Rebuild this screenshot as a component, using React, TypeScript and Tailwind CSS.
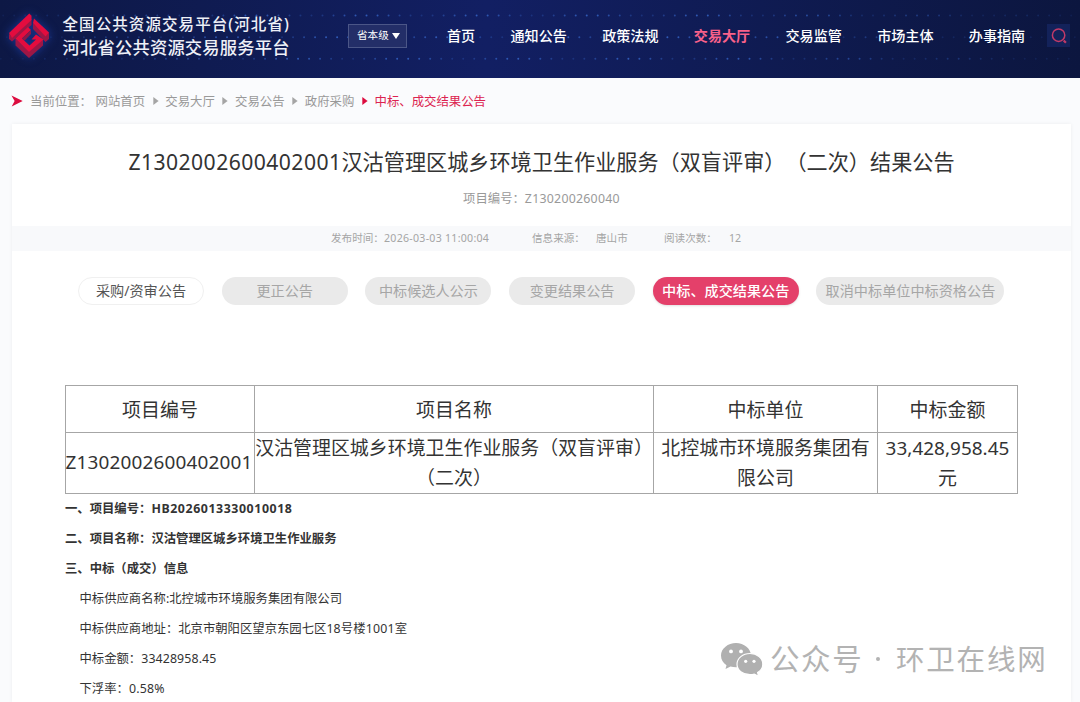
import React from 'react';

const navItems = ['首页', '通知公告', '政策法规', '交易大厅', '交易监管', '市场主体', '办事指南'];
const crumbs = ['网站首页', '交易大厅', '交易公告', '政府采购'];

const tabs = [
  { label: '采购/资审公告', style: 'w-[126px] bg-white border border-[#f0f0f0] text-[#555]' },
  { label: '更正公告', style: 'w-[126px] bg-[#eaeaea] text-[#a6a6a6]' },
  { label: '中标候选人公示', style: 'w-[126px] bg-[#eaeaea] text-[#a6a6a6]' },
  { label: '变更结果公告', style: 'w-[126px] bg-[#eaeaea] text-[#a6a6a6]' },
  { label: '中标、成交结果公告', style: 'w-[146px] bg-[#e4406a] text-white font-medium shadow-sm' },
  { label: '取消中标单位中标资格公告', style: 'w-[188px] bg-[#eaeaea] text-[#a6a6a6]' },
];

const dotRows = [
  { y: 15.5, offset: 3.2 },
  { y: 37.2, offset: 6.8 },
  { y: 58.7, offset: 0.8 },
];

function HeaderDots() {
  return (
    <svg className="absolute inset-0" width="1080" height="78" aria-hidden="true">
      {dotRows.map((row, r) =>
        Array.from({ length: 98 }, (_, i) => {
          const x = row.offset + i * 11.01;
          const edge = Math.min(1, x / 260, (1080 - x) / 360);
          const wave = 0.62 + 0.38 * Math.sin(i * 0.62 + r * 2);
          return <circle key={`${r}-${i}`} cx={x} cy={row.y} r="1" fill="#3563c4" opacity={0.12 + 0.75 * edge * wave} />;
        }),
      )}
    </svg>
  );
}

function Logo() {
  return (
    <svg width="42" height="46" viewBox="0 0 42 46" className="shrink-0 drop-shadow-[0_0_5px_#1a3896]">
      <g fill="#9c1745">
        <path d="M1 20.500 4 24 23.500 6v6L4 28.500 1 26z" />
        <path d="m25 10 12.500 10.500 3.500-1v6.500L37.500 29 25 16z" />
        <path d="M7.500 25.500 21 38.500l14-12v6L21 45 7.500 32.500z" />
      </g>
      <path d="M1 20 21.300.600l2.200 2.200V7L4 25z" fill="#e30c3e" />
      <path d="m25 10 1-4.500L41 19.500l-3.500 4z" fill="#e30c3e" />
      <path d="M7.500 25.500 20 14l3 3-9 8.500 7.500 7 6.500-6h-4.500L28 21.500l7.500 5L21 39z" fill="#e30c3e" />
      <path d="M14 25.500 23 17v4l-6.500 6.800z" fill="#8d1846" />
    </svg>
  );
}

function Caret({ color }: { color: string }) {
  return (
    <svg width="6" height="8" viewBox="0 0 6 8" className="shrink-0">
      <path d="M.3 0 5.600 4 .3 8z" fill={color} />
    </svg>
  );
}

function Header() {
  return (
    <header className="relative h-[78px] bg-linear-to-r from-[#0d1845] via-[#121f63] via-45% to-[#0c163f]">
      <HeaderDots />
      <div className="relative flex h-full">
        <div className="flex w-[348px] pl-2 pt-[13px]">
          <Logo />
          <div className="ml-[12.500px] -mt-px whitespace-nowrap font-medium text-[#eef0f7]">
            <div className="h-6 text-[15.500px] leading-6 tracking-[1.080px]">全国公共资源交易平台(河北省)</div>
            <div className="text-[17.300px] leading-6 tracking-[0.200px]">河北省公共资源交易服务平台</div>
          </div>
        </div>
        <div className="mt-6 flex h-6 w-[59px] items-center border border-[#4b5687] bg-[#232e68] pl-2 text-[10.600px] whitespace-nowrap text-white">
          省本级
          <svg width="8" height="6" viewBox="0 0 8 6" className="ml-[3px] shrink-0">
            <path d="M0 0h8L4 6z" fill="#fff" />
          </svg>
        </div>
        <nav className="ml-[40px] mt-6 flex h-6 items-center gap-[35.300px] text-[14.100px] whitespace-nowrap text-white">
          {navItems.map((item) => (
            <span key={item} className={item === '交易大厅' ? 'font-bold text-[#f9618a]' : 'font-medium'}>
              {item}
            </span>
          ))}
        </nav>
        <div className="ml-[22px] mt-6 flex h-[23px] w-[23px] items-center justify-center bg-[#13225a]">
          <svg width="16" height="16" viewBox="0 0 16 16" fill="none" stroke="#c23a68" strokeWidth="1.500">
            <circle cx="7.600" cy="7.200" r="6.200" />
            <path d="m12.700 12.500 2.200 2.200" strokeWidth="2.200" />
          </svg>
        </div>
      </div>
    </header>
  );
}

function Breadcrumb() {
  return (
    <div className="flex h-[46px] items-center pl-[11px] text-[12.400px] whitespace-nowrap text-[#999]">
      <svg width="12" height="12" viewBox="0 0 12 12" className="mr-[7px] shrink-0">
        <path d="m.5.500 11.200 5.500-11 5.500L3.600 6z" fill="#dc0c3f" />
      </svg>
      <span className="w-[65.500px] pt-0.5">当前位置：</span>
      {crumbs.map((c, i) => (
        <React.Fragment key={c}>
          <span className="mr-[7.500px] pt-0.5">{c}</span>
          <Caret color={i === 3 ? '#dc0c3f' : '#a5a5a5'} />
          <span className="w-[6.700px]" />
        </React.Fragment>
      ))}
      <span className="pt-0.5 text-[#dc2350]">中标、成交结果公告</span>
    </div>
  );
}

function ResultTable() {
  return (
    <table className="ml-[53px] w-[953px] table-fixed border-collapse text-center text-[18.950px] leading-[30px] text-[#333]">
      <colgroup>
        <col className="w-[189px]" />
        <col className="w-[399px]" />
        <col className="w-[224px]" />
        <col className="w-[140px]" />
      </colgroup>
      <tbody>
        <tr className="h-[47px]">
          {['项目编号', '项目名称', '中标单位', '中标金额'].map((h) => (
            <td key={h} className="border border-[#a6a6a6] p-0 pt-px">{h}</td>
          ))}
        </tr>
        <tr className="h-[60px]">
          <td className="border border-[#a6a6a6] p-0 pb-0.5 whitespace-nowrap">
            <span className="-ml-0.5 tracking-[0.180px]">Z1302002600402001</span>
          </td>
          <td className="border border-[#a6a6a6] p-0 whitespace-nowrap">
            汉沽管理区城乡环境卫生作业服务（双盲评审）
            <br />
            （二次）
          </td>
          <td className="border border-[#a6a6a6] p-0 whitespace-nowrap">
            北控城市环境服务集团有
            <br />
            限公司
          </td>
          <td className="border border-[#a6a6a6] p-0 whitespace-nowrap">
            <span className="tracking-[0.020px]">33,428,958.45</span>
            <br />元
          </td>
        </tr>
      </tbody>
    </table>
  );
}

function Watermark() {
  return (
    <div className="absolute left-[720px] top-[638px] flex items-center whitespace-nowrap text-[#b3b3b3]">
      <svg width="44" height="38" viewBox="0 0 44 38" className="shrink-0">
        <path d="M16 3C8 3 1 8.500 1 15.500c0 4 2 7.500 5.500 9.800L5.500 29l5-2.500c1.700.5 3.600.8 5.500.8 8 0 15-5 15-11.800S24 3 16 3z" fill="#b0b0b0" />
        <path d="M30 13.500c-7.200 0-13 4.700-13 10.700s5.800 10.500 13 10.500c1.500 0 3-.2 4.300-.6l4.200 2.100-.9-3.700c3.300-2 5.200-4.900 5.200-8.300 0-6-5.800-10.700-12.800-10.700z" fill="#b0b0b0" stroke="#fff" strokeWidth="1.200" />
        <g fill="#fff">
          <circle cx="11" cy="11.400" r="1.900" />
          <circle cx="21" cy="11.400" r="1.900" />
          <circle cx="25.700" cy="21.300" r="1.600" />
          <circle cx="34" cy="21.300" r="1.600" />
        </g>
      </svg>
      <span className="ml-[6px] w-[106px] pt-px text-[29.500px] leading-10 tracking-[1.600px]">公众号</span>
      <span className="mr-[16px] h-1 w-1 rounded-full bg-[#b3b3b3]" />
      <span className="pt-px text-[28.500px] leading-10 tracking-[1.800px]">环卫在线网</span>
    </div>
  );
}

export default function App() {
  return (
    <div className="relative h-[702px] w-[1080px] overflow-hidden bg-[#fafbfd] font-['Noto_Sans','Noto_Sans_CJK_SC',sans-serif] [text-spacing-trim:space-all]">
      <Header />
      <Breadcrumb />
      <main className="ml-3 h-[578px] w-[1059px] bg-white shadow-[0_0_4px_rgba(0,0,0,0.06)]">
        <h1 className="flex h-[76px] items-center justify-center text-[21.150px] whitespace-nowrap text-[#333]">
          <span className="tracking-[0.440px]">Z1302002600402001</span>
          <span>汉沽管理区城乡环境卫生作业服务（双盲评审）（二次）结果公告</span>
        </h1>
        <div className="-mt-[10px] flex h-[36px] items-start justify-center text-[12.350px] leading-[18px] whitespace-nowrap text-[#999]">
          项目编号：<span className="tracking-[0.250px]">Z130200260040</span>
        </div>
        <div className="flex h-[25px] items-center bg-[#f8f9fb] pl-[319px] text-[10.600px] whitespace-nowrap text-[#a5a5a5]">
          <span className="w-[201px]">
            发布时间：<span className="tracking-[0.270px]">2026-03-03 11:00:04</span>
          </span>
          <span className="w-[64px]">信息来源：</span>
          <span className="w-[68px]">唐山市</span>
          <span className="w-[65px]">阅读次数：</span>
          <span>12</span>
        </div>
        <div className="mt-[26px] flex gap-[17.700px] pl-[66px] text-[14.150px] whitespace-nowrap">
          {tabs.map((t) => (
            <div key={t.label} className={`flex h-7 shrink-0 items-center justify-center rounded-full ${t.style}`}>
              {t.label}
            </div>
          ))}
        </div>
        <div className="h-[80px]" />
        <ResultTable />
        <div className="pl-[53px] text-[12.350px] leading-[30px] whitespace-nowrap text-[#333]">
          <p className="font-bold">
            一、项目编号：<span className="tracking-[0.580px]">HB2026013330010018</span>
          </p>
          <p className="font-bold">二、项目名称：汉沽管理区城乡环境卫生作业服务</p>
          <p className="font-bold">三、中标（成交）信息</p>
          <div className="pl-[14.500px]">
            <p>中标供应商名称:北控城市环境服务集团有限公司</p>
            <p>
              中标供应商地址：北京市朝阳区望京东园七区<span className="tracking-[0.150px]">18号楼1001室</span>
            </p>
            <p>
              中标金额：<span className="tracking-[0.120px]">33428958.45</span>
            </p>
            <p>
              下浮率：<span className="tracking-[0.200px]">0.58%</span>
            </p>
          </div>
        </div>
      </main>
      <Watermark />
    </div>
  );
}
